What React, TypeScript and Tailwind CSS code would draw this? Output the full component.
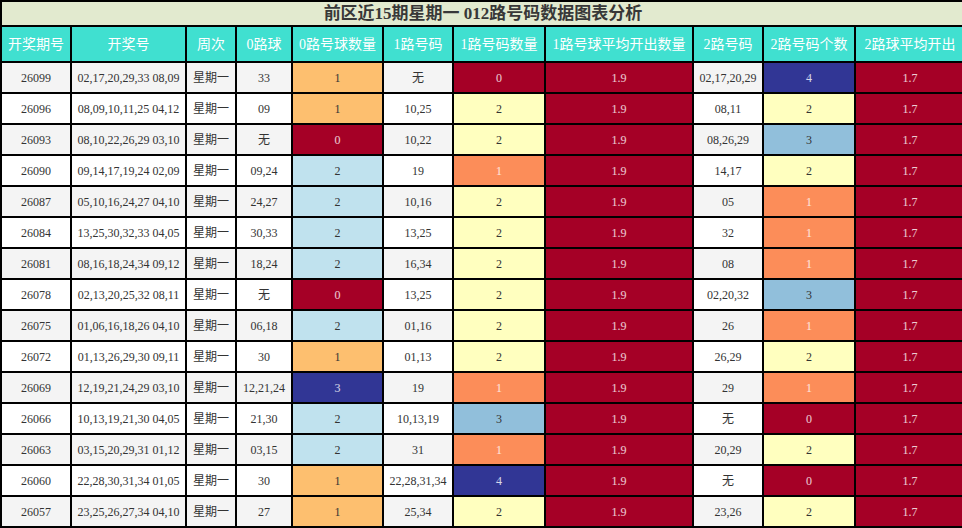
import React from "react";

type Row = {
  issue: string;
  nums: string;
  zero: string;
  zeroCount: number;
  one: string;
  oneCount: number;
  two: string;
  twoCount: number;
};

const rows: Row[] = [
  { issue: "26099", nums: "02,17,20,29,33 08,09", zero: "33", zeroCount: 1, one: "无", oneCount: 0, two: "02,17,20,29", twoCount: 4 },
  { issue: "26096", nums: "08,09,10,11,25 04,12", zero: "09", zeroCount: 1, one: "10,25", oneCount: 2, two: "08,11", twoCount: 2 },
  { issue: "26093", nums: "08,10,22,26,29 03,10", zero: "无", zeroCount: 0, one: "10,22", oneCount: 2, two: "08,26,29", twoCount: 3 },
  { issue: "26090", nums: "09,14,17,19,24 02,09", zero: "09,24", zeroCount: 2, one: "19", oneCount: 1, two: "14,17", twoCount: 2 },
  { issue: "26087", nums: "05,10,16,24,27 04,10", zero: "24,27", zeroCount: 2, one: "10,16", oneCount: 2, two: "05", twoCount: 1 },
  { issue: "26084", nums: "13,25,30,32,33 04,05", zero: "30,33", zeroCount: 2, one: "13,25", oneCount: 2, two: "32", twoCount: 1 },
  { issue: "26081", nums: "08,16,18,24,34 09,12", zero: "18,24", zeroCount: 2, one: "16,34", oneCount: 2, two: "08", twoCount: 1 },
  { issue: "26078", nums: "02,13,20,25,32 08,11", zero: "无", zeroCount: 0, one: "13,25", oneCount: 2, two: "02,20,32", twoCount: 3 },
  { issue: "26075", nums: "01,06,16,18,26 04,10", zero: "06,18", zeroCount: 2, one: "01,16", oneCount: 2, two: "26", twoCount: 1 },
  { issue: "26072", nums: "01,13,26,29,30 09,11", zero: "30", zeroCount: 1, one: "01,13", oneCount: 2, two: "26,29", twoCount: 2 },
  { issue: "26069", nums: "12,19,21,24,29 03,10", zero: "12,21,24", zeroCount: 3, one: "19", oneCount: 1, two: "29", twoCount: 1 },
  { issue: "26066", nums: "10,13,19,21,30 04,05", zero: "21,30", zeroCount: 2, one: "10,13,19", oneCount: 3, two: "无", twoCount: 0 },
  { issue: "26063", nums: "03,15,20,29,31 01,12", zero: "03,15", zeroCount: 2, one: "31", oneCount: 1, two: "20,29", twoCount: 2 },
  { issue: "26060", nums: "22,28,30,31,34 01,05", zero: "30", zeroCount: 1, one: "22,28,31,34", oneCount: 4, two: "无", twoCount: 0 },
  { issue: "26057", nums: "23,25,26,27,34 04,10", zero: "27", zeroCount: 1, one: "25,34", oneCount: 2, two: "23,26", twoCount: 2 },
];

const headers = [
  "开奖期号",
  "开奖号",
  "周次",
  "0路球",
  "0路号球数量",
  "1路号码",
  "1路号码数量",
  "1路号球平均开出数量",
  "2路号码",
  "2路号码个数",
  "2路球平均开出",
];

const gridCols =
  "grid grid-cols-[70px_115px_50px_56px_91px_70px_92px_148px_70px_92px_1fr]";

const dark = "text-white/80";

// 0路号球数量 uses its own scale
const zeroColor: Record<number, string> = {
  0: `bg-[#a50026] ${dark}`,
  1: "bg-[#fdbf6f] text-[#333]",
  2: "bg-[#c0e2ee] text-[#333]",
  3: `bg-[#313695] ${dark}`,
};

const countColor: Record<number, string> = {
  0: `bg-[#a50026] ${dark}`,
  1: `bg-[#fc8d59] ${dark}`,
  2: "bg-[#ffffbf] text-[#333]",
  3: "bg-[#91bfdb] text-[#333]",
  4: `bg-[#313695] ${dark}`,
};

const cell =
  "flex items-center justify-center border-r-2 border-b-2 border-black h-[31px] text-[12px] whitespace-nowrap";

const App = () => {
  return (
    <div
      className="w-[962px] h-[528px] overflow-hidden bg-white"
      style={{ fontFamily: '"Liberation Serif", "Noto Sans CJK SC", serif' }}
    >
      <div className="w-[966px] border-l-2 border-t-2 border-black">
        <div className="h-[25px] flex items-center justify-center border-r-2 border-b-2 border-black bg-[#e2eacf] text-[17px] font-bold text-[#383838]">
          前区近15期星期一 012路号码数据图表分析
        </div>

        <div className={gridCols}>
          {headers.map((h) => (
            <div
              key={h}
              className="flex items-center justify-center h-[36px] border-r-2 border-b-2 border-black bg-[#40e0d0] text-white text-[14px] whitespace-nowrap"
            >
              {h}
            </div>
          ))}
        </div>

        {rows.map((r, i) => {
          const plain = i % 2 === 0 ? "bg-[#f4f4f4] text-[#333]" : "bg-white text-[#333]";
          return (
            <div key={r.issue} className={gridCols}>
              <div className={`${cell} ${plain}`}>{r.issue}</div>
              <div className={`${cell} ${plain}`}>{r.nums}</div>
              <div className={`${cell} ${plain}`}>星期一</div>
              <div className={`${cell} ${plain}`}>{r.zero}</div>
              <div className={`${cell} ${zeroColor[r.zeroCount]}`}>{r.zeroCount}</div>
              <div className={`${cell} ${plain}`}>{r.one}</div>
              <div className={`${cell} ${countColor[r.oneCount]}`}>{r.oneCount}</div>
              <div className={`${cell} bg-[#a50026] ${dark}`}>1.9</div>
              <div className={`${cell} ${plain}`}>{r.two}</div>
              <div className={`${cell} ${countColor[r.twoCount]}`}>{r.twoCount}</div>
              <div className={`${cell} bg-[#a50026] ${dark}`}>1.7</div>
            </div>
          );
        })}
      </div>
    </div>
  );
};

export default App;
